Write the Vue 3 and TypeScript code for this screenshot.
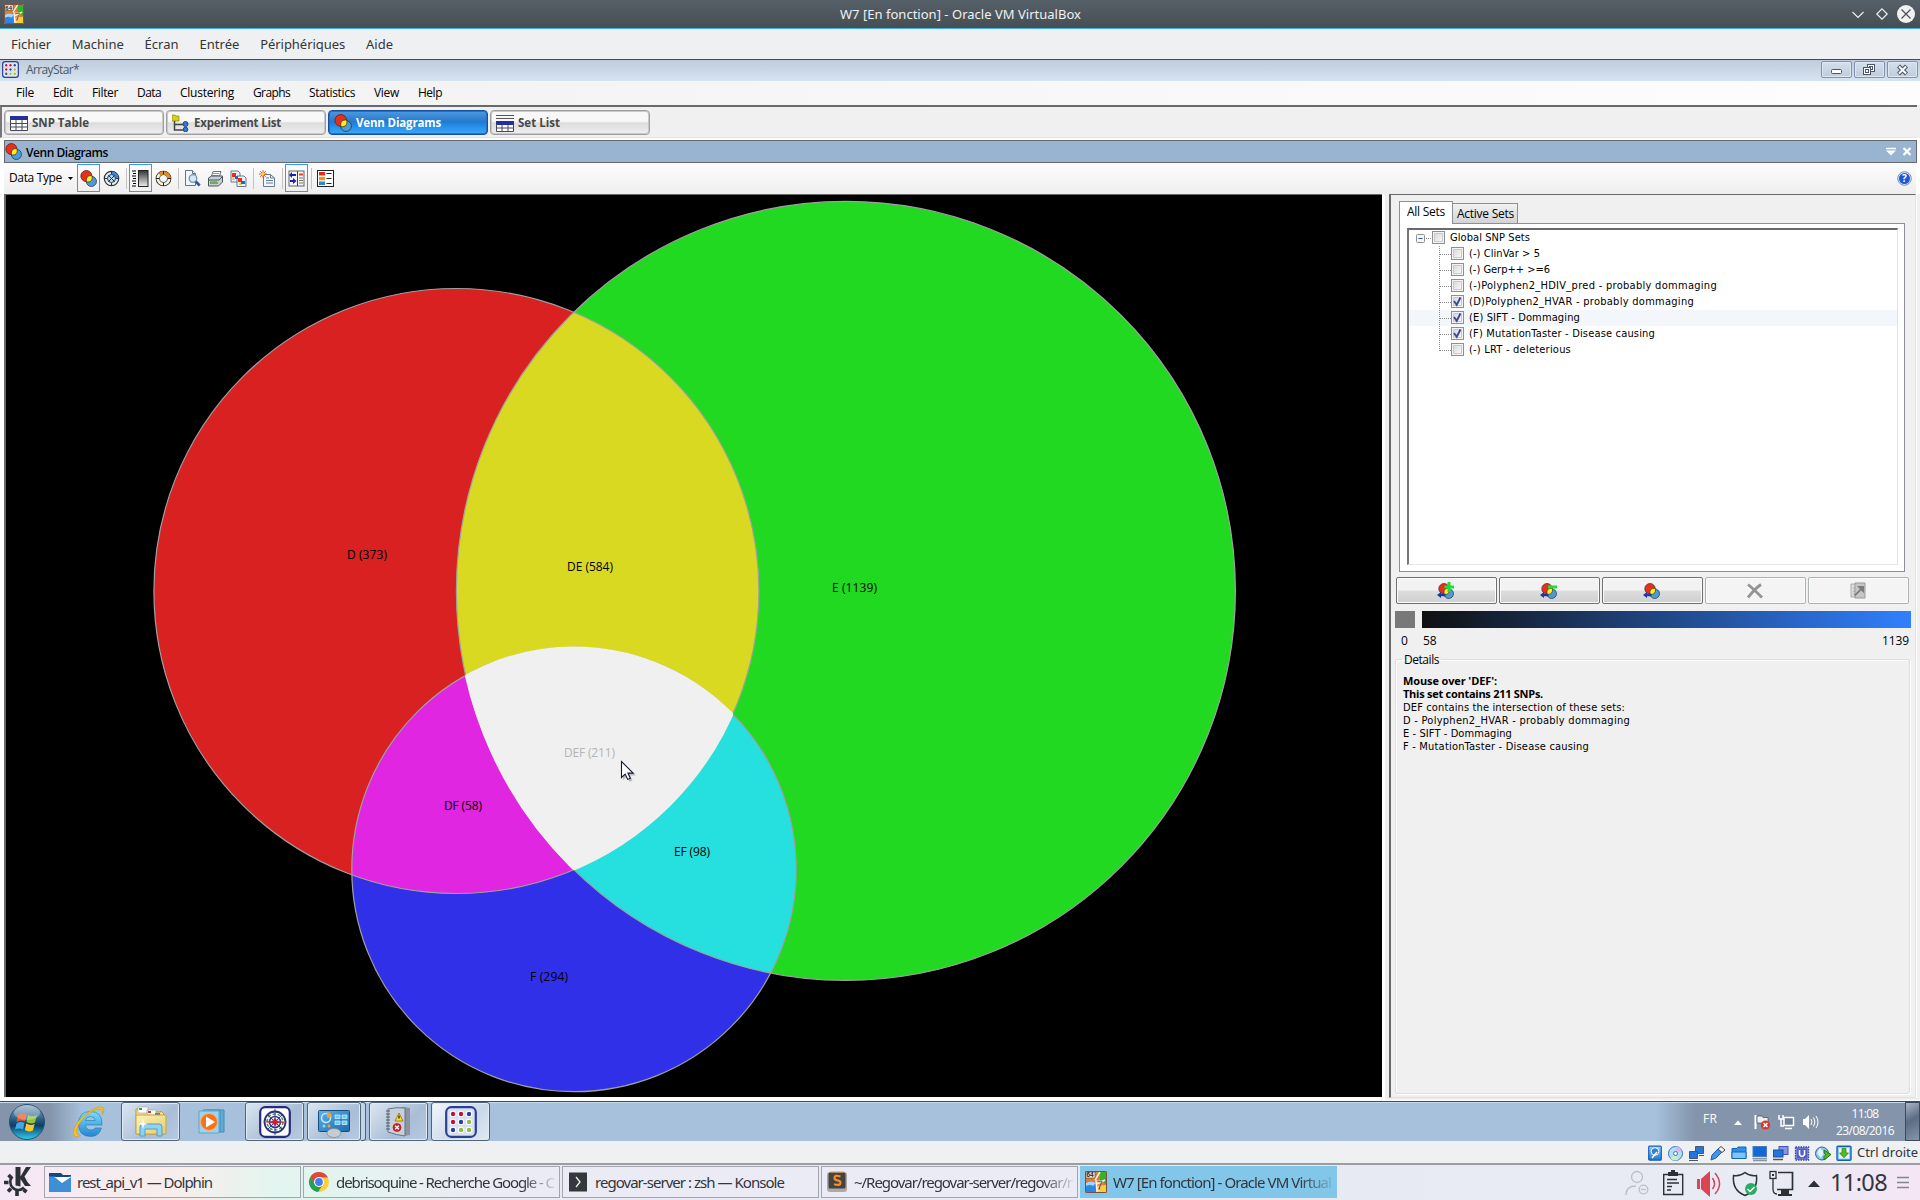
<script setup lang="ts">
import type { Directive } from 'vue'

// Spreads or tightens letters so a label occupies the given pixel width.
const vFit: Directive<HTMLElement, number> = {
  mounted(el, { value }) {
    const natural = el.getBoundingClientRect().width
    const count = (el.textContent ?? '').trim().length
    if (value && count) el.style.letterSpacing = `${(value - natural) / count}px`
  },
}

interface Label { text: string; width: number }

const hostMenu: Label[] = [
  { text: 'Fichier', width: 40 },
  { text: 'Machine', width: 52 },
  { text: 'Écran', width: 34 },
  { text: 'Entrée', width: 40 },
  { text: 'Périphériques', width: 85 },
  { text: 'Aide', width: 27 },
]

const appMenu: Label[] = [
  { text: 'File', width: 18 },
  { text: 'Edit', width: 20 },
  { text: 'Filter', width: 26 },
  { text: 'Data', width: 24 },
  { text: 'Clustering', width: 54 },
  { text: 'Graphs', width: 37 },
  { text: 'Statistics', width: 46 },
  { text: 'View', width: 25 },
  { text: 'Help', width: 24 },
]

const views = [
  { text: 'SNP Table', width: 57, icon: 'table', active: false },
  { text: 'Experiment List', width: 87, icon: 'tree', active: false },
  { text: 'Venn Diagrams', width: 85, icon: 'venn', active: true },
  { text: 'Set List', width: 42, icon: 'list', active: false },
]

const sets = [
  { text: '(-) ClinVar > 5', width: 71, on: false, hover: false },
  { text: '(-) Gerp++ >=6', width: 81, on: false, hover: false },
  { text: '(-)Polyphen2_HDIV_pred - probably dommaging', width: 248, on: false, hover: false },
  { text: '(D)Polyphen2_HVAR - probably dommaging', width: 225, on: true, hover: false },
  { text: '(E) SIFT - Dommaging', width: 111, on: true, hover: true },
  { text: '(F) MutationTaster - Disease causing', width: 186, on: true, hover: false },
  { text: '(-) LRT - deleterious', width: 102, on: false, hover: false },
]

const regions = [
  { text: 'D (373)', x: 347, y: 559, width: 40 },
  { text: 'DE (584)', x: 567, y: 571, width: 46 },
  { text: 'E (1139)', x: 832, y: 592, width: 45 },
  { text: 'DF (58)', x: 444, y: 810, width: 38 },
  { text: 'EF (98)', x: 674, y: 856, width: 36 },
  { text: 'F (294)', x: 530, y: 981, width: 38 },
]

const details = [
  { text: "Mouse over 'DEF':", width: 94, bold: true },
  { text: 'This set contains 211 SNPs.', width: 140, bold: true },
  { text: 'DEF contains the intersection of these sets:', width: 222, bold: false },
  { text: 'D - Polyphen2_HVAR - probably dommaging', width: 227, bold: false },
  { text: 'E - SIFT - Dommaging', width: 109, bold: false },
  { text: 'F - MutationTaster - Disease causing', width: 186, bold: false },
]

const tasks = [
  { text: 'rest_api_v1 — Dolphin', width: 135, icon: 'dolphin', active: false, fade: false },
  { text: 'debrisoquine - Recherche Google - C', width: 218, icon: 'chrome', active: false, fade: true },
  { text: 'regovar-server : zsh — Konsole', width: 189, icon: 'konsole', active: false, fade: false },
  { text: '~/Regovar/regovar-server/regovar/r', width: 218, icon: 'sublime', active: false, fade: true },
  { text: 'W7 [En fonction] - Oracle VM Virtual', width: 218, icon: 'vm', active: true, fade: true },
]

const dots = ['#c8102e', '#c8102e', '#2b3f9b', '#c8102e', '#2b3f9b', '#8fbf3a', '#2b3f9b', '#8fbf3a', '#8fbf3a']
</script>

<template>
  <div class="screen">
    <svg class="defs" width="0" height="0">
      <defs>
        <linearGradient id="orb" x1="0" y1="0" x2="0" y2="1">
          <stop offset="0" stop-color="#8fb0c8" /><stop offset=".45" stop-color="#28587f" /><stop offset=".6" stop-color="#0b3f66" /><stop offset="1" stop-color="#2fd0f2" />
        </linearGradient>
        <linearGradient id="grayRamp" x1="0" y1="0" x2="0" y2="1">
          <stop offset="0" stop-color="#333" /><stop offset="1" stop-color="#eee" />
        </linearGradient>
        <linearGradient id="ie" x1="0" y1="0" x2="0" y2="1">
          <stop offset="0" stop-color="#7ddcf8" /><stop offset="1" stop-color="#2387d2" />
        </linearGradient>
        <linearGradient id="folder" x1="0" y1="0" x2="1" y2="1">
          <stop offset="0" stop-color="#fdf2b8" /><stop offset="1" stop-color="#e8cc68" />
        </linearGradient>
        <linearGradient id="panelBlue" x1="0" y1="0" x2="1" y2="1">
          <stop offset="0" stop-color="#5cb4ea" /><stop offset="1" stop-color="#1d69ad" />
        </linearGradient>
        <linearGradient id="boxBlue" x1="0" y1="0" x2="0" y2="1">
          <stop offset="0" stop-color="#9bd4f8" /><stop offset="1" stop-color="#1f74d0" />
        </linearGradient>
        <symbol id="venn" viewBox="0 0 16 16">
          <circle cx="10.7" cy="10.7" r="4.8" fill="#4f9ad6" stroke="#26445e" stroke-width=".8" />
          <circle cx="6" cy="5.7" r="5.2" fill="#e5301d" stroke="#6c241d" stroke-width=".8" />
          <path d="M6.300 11.300C5 7.300 7.600 4.600 11.300 5.500C12.200 9 10.300 11.800 6.300 11.300z" fill="#ffee2a" stroke="#3f3a10" stroke-width=".7" />
        </symbol>
        <symbol id="vm" viewBox="0 0 22 22">
          <rect width="22" height="22" rx="1" fill="#e47a32" />
          <path d="M1 12q5-3 10 0v9H1z" fill="#2d86e6" /><path d="M1 12q5-3 10 0l-3 3q-3-2-7 0z" fill="#9fd8fa" />
          <path d="M15 1h6v13q-4-5-6-4z" fill="#35b22c" /><path d="M12 15l9-1v7h-9z" fill="#f9cf38" />
          <path d="M10 9l5-8M12 13l8-4M11 9l1 12" stroke="#fff2d8" stroke-width="1.5" />
          <rect x="1" y="1" width="9" height="6" fill="#f0f0f0" stroke="#333" stroke-width=".5" />
          <text x="1.5" y="6.4" font-size="6.5" font-weight="700" font-family="Liberation Sans, sans-serif" fill="#222">64</text>
          <text x="11.5" y="19" font-size="12" font-weight="700" font-family="Liberation Sans, sans-serif" fill="#8a1520" stroke="#fff" stroke-width=".35">7</text>
          <rect x=".5" y=".5" width="21" height="21" rx="1" fill="none" stroke="#75523e" />
        </symbol>
        <symbol id="arraystar" viewBox="0 0 32 32">
          <rect x="1.2" y="1.2" width="29.6" height="29.6" rx="5" fill="#d6e0f2" stroke="#2b3f93" stroke-width="2.2" />
          <g v-for="(c, i) in dots" :key="i">
            <circle :cx="8 + (i % 3) * 8" :cy="8 + Math.floor(i / 3) * 8" r="3.3" fill="#fff" />
            <circle :cx="8 + (i % 3) * 8" :cy="8 + Math.floor(i / 3) * 8" r="2.2" :fill="c" />
          </g>
        </symbol>
      </defs>
    </svg>

    <header class="host-title">
      <svg class="host-logo" width="20" height="20"><use href="#vm" /></svg>
      <span class="host-caption"><span v-fit="241">W7 [En fonction] - Oracle VM VirtualBox</span></span>
      <svg width="70" height="28" viewBox="0 0 70 28">
        <path d="M2.500 12l5.500 5.500 5.500-5.500" fill="none" stroke="#eceff1" stroke-width="1.200" />
        <path d="M32 8.800l5.200 5.200-5.200 5.200-5.200-5.200z" fill="none" stroke="#eceff1" stroke-width="1.200" />
        <circle cx="56" cy="14" r="9" fill="#f0f1f2" /><path d="M51.500 9.500l9 9m0-9l-9 9" stroke="#475057" stroke-width="1.200" />
      </svg>
    </header>

    <nav class="host-menu"><span v-for="m in hostMenu" :key="m.text" v-fit="m.width">{{ m.text }}</span></nav>

    <div class="app-title">
      <svg width="17" height="17"><use href="#arraystar" /></svg>
      <span class="app-name"><span v-fit="53">ArrayStar*</span></span>
      <div class="win-buttons">
        <i><svg width="29" height="15"><rect x="9.500" y="7.500" width="10" height="4" rx="1" fill="#fff" stroke="#4b5568" /></svg></i>
        <i><svg width="29" height="15"><g fill="#fff" stroke="#4b5568"><rect x="12.500" y="2.500" width="7" height="7" /><rect x="14.500" y="4.500" width="3" height="3" /><rect x="8.500" y="5.500" width="7" height="7" /><rect x="10.500" y="7.500" width="3" height="3" /></g></svg></i>
        <i><svg width="29" height="15"><path d="M10.500 4l8 8m0-8l-8 8" stroke="#4b5568" stroke-width="4.200" /><path d="M11 4.500l7 7m0-7l-7 7" stroke="#fff" stroke-width="2" /></svg></i>
      </div>
    </div>
    <nav class="app-menu"><span v-for="m in appMenu" :key="m.text" v-fit="m.width">{{ m.text }}</span></nav>

    <div class="views">
      <div v-for="v in views" :key="v.text" class="view" :class="{ active: v.active }">
        <svg width="18" height="18" viewBox="0 0 18 18">
          <use v-if="v.icon === 'venn'" href="#venn" width="18" height="18" />
          <g v-else-if="v.icon === 'table'"><rect x=".5" y="2" width="17" height="14" fill="#fff" /><rect x="0" y="2" width="18" height="4" fill="#24309a" /><path d="M.5 6v10.500h17V6M.5 9.500h17M.5 13h17M6 6v10.500M12 6v10.500" stroke="#444b5e" fill="none" /></g>
          <g v-else-if="v.icon === 'tree'"><path d="M0 1h3l1 1h3v5H0z" fill="#d9cf19" stroke="#77720d" stroke-width=".6" /><path d="M2.500 7v9h9M3 10.500h8" fill="none" stroke="#444" stroke-width="1.500" /><circle cx="13.500" cy="10" r="2.500" fill="#3678d1" stroke="#224786" /><circle cx="13.500" cy="15.500" r="2.300" fill="#3678d1" stroke="#224786" /></g>
          <g v-else><path d="M0 1.500h18M0 4.500h18" stroke="#555" /><rect x=".5" y="8" width="17" height="9" fill="#fff" /><rect x="0" y="7" width="18" height="4" fill="#24309a" /><path d="M.5 10v7.500h17V10M.5 14h17M6 11v6.500M12 11v6.500" stroke="#444b5e" fill="none" /></g>
        </svg>
        <b v-fit="v.width">{{ v.text }}</b>
      </div>
    </div>

    <section class="child">
      <div class="child-title">
        <svg width="17" height="17"><use href="#venn" /></svg>
        <b v-fit="82">Venn Diagrams</b>
        <svg class="push" width="29" height="12"><path d="M0 2.500h10" stroke="#fff" stroke-width="1.500" /><path d="M0 4.500h10l-5 5z" fill="#fff" /><path d="M17.500 2l7 7m0-7l-7 7" stroke="#fff" stroke-width="2.200" /></svg>
      </div>

      <div class="toolbar">
        <span v-fit="53" class="dtype">Data Type</span>
        <svg class="drop" width="5" height="3"><path d="M0 0h5L2.500 3z" /></svg>
        <i class="tool on"><svg width="17" height="17"><use href="#venn" /></svg></i>
        <i class="tool"><svg width="17" height="17" viewBox="0 0 17 17"><circle cx="8.500" cy="8.500" r="7.200" fill="#e8edf2" stroke="#27343f" stroke-width="1.200" /><path d="M8.500 1.500a7 7 0 0 1 7 7h-3a4 4 0 0 0-4-4z" fill="#2f8ae0" /><circle cx="8.500" cy="8.500" r="4" fill="#b8dcf5" stroke="#27343f" /><path d="M5.700 5.700l5.600 5.600m0-5.600l-5.600 5.600M8.500 1v3m0 9v3M1 8.500h3m9 0h3" stroke="#27343f" /></svg></i>
        <u />
        <i class="tool on"><svg width="17" height="18"><path d="M0 2h4M1 4.500h3M0 7h4M1 9.500h3M0 12h4M1 14.500h3M0 17h4" stroke="#000" /><rect x="6.500" y="1.500" width="9.500" height="16" fill="url(#grayRamp)" stroke="#222" /></svg></i>
        <i class="tool"><svg width="17" height="17" viewBox="0 0 17 17"><circle cx="8.500" cy="8.500" r="5.700" fill="none" stroke="#222" stroke-width="4.300" /><circle cx="8.500" cy="8.500" r="5.700" fill="none" stroke="#f7eedb" stroke-width="2.800" /><path d="M4.500 4.500a5.700 5.700 0 0 1 9.700 4" fill="none" stroke="#e88716" stroke-width="2.800" /><path d="M8.500 1v3M8.500 13v3M1 8.500h3m9 0h3" stroke="#222" /></svg></i>
        <u />
        <i class="tool"><svg width="17" height="17"><path d="M1.500.5h7l3 3v12h-10z" fill="#f2f6fa" stroke="#60758d" /><path d="M8.500.5v3h3" fill="#fff" stroke="#60758d" /><circle cx="9" cy="8.500" r="3.800" fill="#d3e7f7" stroke="#7890ab" stroke-width="1.300" /><path d="M11.700 11.500l4 4" stroke="#35559a" stroke-width="2.600" /></svg></i>
        <i class="tool"><svg width="17" height="17"><path d="M6 1.500h8l-2 6H4z" fill="#fff" stroke="#65717b" /><path d="M6 3.500h6M5.500 5.500h6" stroke="#8796a3" /><path d="M1.500 8l3-2h11v6l-4 4h-10z" fill="#c8cfd3" stroke="#4a555e" /><path d="M2 10h10l3-3M3 13h8" stroke="#4a555e" fill="none" /><path d="M3 12h7" stroke="#61b74e" stroke-width="1.500" /></svg></i>
        <i class="tool"><svg width="17" height="17"><path d="M1 1h7l2 2v9H1z" fill="#eef2f6" stroke="#66798e" /><path d="M7 6h7l2 2v8.500H7z" fill="#eef2f6" stroke="#66798e" /><path d="M2 3h4v4H2zM8 8h4v4H8z" fill="#e3321c" /><path d="M5 6h3v3H5zM11 11h4v3h-4z" fill="#2863c4" /><path d="M3 7l2 3H2zM10 12l2 3H9z" fill="#f2c21c" /></svg></i>
        <u />
        <i class="tool"><svg width="17" height="17"><path d="M4.500 4.500h7l4 3.500v8.500h-11z" fill="#f3f6f9" stroke="#667b90" /><path d="M11.500 4.500V8h4M7 8h3M7 10.500h7M7 13h7" stroke="#667b90" fill="none" /><path d="M4 0v8M0 4h8M1.200 1.200l5.600 5.600m0-5.600L1.200 6.800" stroke="#ea5a1a" /><circle cx="4" cy="4" r="1.500" fill="#ffda35" /></svg></i>
        <u />
        <i class="tool on"><svg width="17" height="17"><rect x="1" y="1" width="15" height="15" fill="#f4f4f4" stroke="#62676d" /><path d="M9.500 1v15" stroke="#444" /><path d="M4 2L1 5l3 3V6h4V4H4zM5 8v2H2v2h3v2l3.500-3z" fill="#1c24a6" /><path d="M11 4.500h4" stroke="#e2421f" stroke-width="2" /><path d="M11 8h4M11 10.500h4M11 13h4" stroke="#777" /></svg></i>
        <u />
        <i class="tool"><svg width="17" height="17"><rect x=".5" y=".5" width="16" height="16" fill="#fff" stroke="#222" /><rect x="2" y="2" width="6" height="3.500" fill="#e02d19" /><rect x="2" y="6.800" width="6" height="3.500" fill="#ee941f" /><rect x="2" y="11.500" width="6" height="3.500" fill="#2f84dc" /><path d="M9.500 3.500h5M9.500 8.500h5M9.500 13.500h5" stroke="#222" /></svg></i>
        <svg class="push" width="15" height="15"><circle cx="7.500" cy="7.500" r="6.800" fill="#dce7fb" stroke="#6a86bb" stroke-width=".9" /><circle cx="7.500" cy="7.500" r="5.500" fill="#1d57d8" /><text x="7.500" y="11.200" text-anchor="middle" font-size="10" font-weight="700" fill="#fff">?</text></svg>
      </div>

      <div class="work">
        <svg class="canvas" width="1378" height="903" viewBox="4 194 1378 903">
          <defs>
            <clipPath id="inD"><circle cx="456.400" cy="591" r="302.500" /></clipPath>
            <clipPath id="inE"><circle cx="845.900" cy="590.900" r="389.500" /></clipPath>
            <clipPath id="inF"><circle cx="574" cy="869.500" r="222.200" /></clipPath>
          </defs>
          <rect x="4" y="194" width="1378" height="903" fill="#696969" /><rect x="6" y="195" width="1376" height="902" />
          <circle cx="456.400" cy="591" r="302.500" fill="#d92121" />
          <circle cx="845.900" cy="590.900" r="389.500" fill="#21d921" />
          <circle cx="574" cy="869.500" r="222.200" fill="#3030e8" />
          <circle cx="845.900" cy="590.900" r="389.500" fill="#d9d921" clip-path="url(#inD)" />
          <circle cx="574" cy="869.500" r="222.200" fill="#e026e0" clip-path="url(#inD)" />
          <circle cx="574" cy="869.500" r="222.200" fill="#26e0e0" clip-path="url(#inE)" />
          <g fill="none" stroke="#a0a0a0" stroke-width="1.200">
            <circle cx="456.400" cy="591" r="302.500" /><circle cx="845.900" cy="590.900" r="389.500" /><circle cx="574" cy="869.500" r="222.200" />
          </g>
          <g clip-path="url(#inD)"><g clip-path="url(#inE)"><circle cx="574" cy="869.500" r="222.200" fill="#f0f0f0" /></g></g>
          <g fill="none" stroke="#f0f0f0" stroke-width="1.600">
            <g clip-path="url(#inD)"><g clip-path="url(#inE)"><circle cx="574" cy="869.500" r="222.200" /></g></g>
            <g clip-path="url(#inD)"><g clip-path="url(#inF)"><circle cx="845.900" cy="590.900" r="389.500" /></g></g>
            <g clip-path="url(#inE)"><g clip-path="url(#inF)"><circle cx="456.400" cy="591" r="302.500" /></g></g>
          </g>
          <text v-for="r in regions" :key="r.text" :x="r.x" :y="r.y" :textLength="r.width">{{ r.text }}</text>
          <text x="564" y="757" textLength="51" fill="#b4b4b4">DEF (211)</text>
          <path d="M623 763v17l4-3.500 2.500 5.500 3-1.500-2.500-5h6z" opacity=".22" />
          <path d="M621.500 761.500v16l3.700-3.400 2.500 5.300 2.700-1.200-2.500-5.100h5.300z" fill="#fff" stroke="#14182e" stroke-width="1.100" />
        </svg>

        <aside class="side">
          <div class="tabs"><span class="tab front"><span v-fit="38">All Sets</span></span><span class="tab"><span v-fit="57">Active Sets</span></span></div>
          <div class="page">
            <div class="tree">
              <div class="row root">
                <svg width="16" height="16"><rect x=".5" y="4.500" width="8" height="8" rx="1" fill="#f6f6f6" stroke="#8e8f8f" /><path d="M2.500 8.500h4" stroke="#3553a4" /><path d="M10 8.500h6" stroke="#888" stroke-dasharray="1 1" /></svg>
                <i class="check" /><span v-fit="80">Global SNP Sets</span>
              </div>
              <div v-for="(s, i) in sets" :key="s.text" class="row" :class="{ hover: s.hover }">
                <svg class="branch" width="12" height="16"><path :d="i === 6 ? 'M.5 0v9' : 'M.5 0v16'" stroke="#888" stroke-dasharray="1 1" /><path d="M1 8.500h11" stroke="#888" stroke-dasharray="1 1" /></svg>
                <i class="check"><svg v-if="s.on" width="11" height="11"><path d="M2 5l2.700 3.800L8.500 1.500" fill="none" stroke="#3c4f97" stroke-width="2" /></svg></i>
                <span v-fit="s.width">{{ s.text }}</span>
              </div>
            </div>
          </div>

          <div class="actions">
            <div v-for="n in 5" :key="n" class="action" :class="{ off: n > 3 }">
              <svg width="18" height="18" viewBox="0 0 18 18">
                <template v-if="n < 4">
                  <use href="#venn" x="1" y="1" width="16" height="16" />
                  <path d="M0 13l4-3v2h4.500v2.200H4V16z" fill="#173aa5" />
                  <path v-if="n === 1" d="M10.500 0h3v3.500h3.500v3h-3.500V10h-3V6.500H7.500v-3h3z" fill="#22dc38" />
                  <path v-if="n === 2" d="M8 3.500h9v3H8z" fill="#22dc38" />
                </template>
                <path v-else-if="n === 4" d="M2 2.500c4 3 8 7 14 13M15 2.500c-5 3-8 7-13 13" fill="none" stroke="#929292" stroke-width="2.800" />
                <g v-else><path d="M2 2h10v13H2z" fill="#ddd" stroke="#aaa" /><path d="M4 6h6M4 9h6M4 12h6" stroke="#aaa" /><path d="M6 1h10v15H6z" fill="#c6c6c6" stroke="#999" /><path d="M5 13l6-6-3-3h7v7l-3-2.500-5.500 5.500z" fill="#7b7b7b" /></g>
              </svg>
            </div>
          </div>

          <div class="scale"><i /><b /></div>
          <div class="scale-labels"><span>0</span><span v-fit="14">58</span><span v-fit="27" class="push">1139</span></div>

          <fieldset class="details">
            <legend><span v-fit="35">Details</span></legend>
            <p v-for="d in details" :key="d.text"><span v-fit="d.width" :class="{ bold: d.bold }">{{ d.text }}</span></p>
          </fieldset>
        </aside>
      </div>
    </section>

    <div class="win-bar">
      <svg class="orb" width="38" height="38" viewBox="0 0 38 38">
        <circle cx="19" cy="19" r="17.500" fill="url(#orb)" stroke="#24506f" />
        <path d="M10 12q4-3 8.500-.5l-1.500 7q-4-2-8.500.5z" fill="#ee5a24" /><path d="M20 12q4.500 2.500 9 0l-2 7.500q-4 2-8.500-.5z" fill="#8cc63e" /><path d="M8.500 20.500q4-2.500 8-.5l-1.500 6.500q-4-2-8 0z" fill="#3fa9e8" /><path d="M18.200 20.500q4.500 2.500 8.500.5l-1.800 6.500q-4 2-8-.5z" fill="#fdc629" />
        <ellipse cx="19" cy="9.500" rx="13" ry="7.500" fill="#fff" opacity=".28" />
      </svg>
      <svg class="ie" width="34" height="34" viewBox="0 0 34 34">
        <path fill-rule="evenodd" d="M30 20H13.500q.5 5 5.500 5 3 0 4-2h6.500q-2.500 8.500-10.500 8.500Q6.500 31.500 6.500 19 6.500 6.500 18.500 6.500 30.500 6.500 30 20zM13.500 15.500h9.800q-.5-4-4.800-4-4.200 0-5 4z" fill="url(#ie)" stroke="#1c77b8" stroke-width=".6" />
        <path d="M8.500 30.500Q2 34 1.500 28 1.500 18 16 7.500 25 1 30 2q3.500 1.500.5 7.500 1-5-3-5.500-5 0-12.500 6Q4 20 4.500 27q.5 3.500 4 3.500z" fill="#f7c61d" stroke="#c8920a" stroke-width=".5" />
      </svg>
      <div class="wbtn b1">
        <svg width="34" height="34" viewBox="0 0 34 34"><path d="M2 4h9l2 3h14v-1l3 3v20H2z" fill="#f4e296" stroke="#bb9a38" /><path d="M4 2h10v6H4zM13 5h9v5h-9z" fill="#fff" stroke="#a8a08a" stroke-width=".6" /><path d="M5 3h3v2H5z" fill="#39a33c" /><path d="M14 6h3v2h-3z" fill="#cf3a30" /><path d="M21 8h5v2h-5z" fill="#3a85d0" /><path d="M2 10h30v19H2z" fill="url(#folder)" stroke="#c6a548" /><path d="M6 31V22q0-3 3-3h16q3 0 3 3v9h-5v-7H11v7z" fill="#8fd3f0" stroke="#4c9fc8" /><path d="M9 14l1 4 4 1-4 1-1 4-1-4-4-1 4-1z" fill="#fff" /></svg>
      </div>
      <svg class="wmp" width="30" height="30" viewBox="0 0 30 30"><path d="M8 3h18v22H8z" fill="#5eacd6" stroke="#458bb5" /><path d="M5 3h17v22H5z" fill="#79bfe2" stroke="#458bb5" /><path d="M1 4h20v22H1z" fill="#9ed2ed" stroke="#62a5cb" /><circle cx="11" cy="15" r="8.500" fill="#f3741d" stroke="#fbb37b" /><path d="M8 9.500v11l9-5.500z" fill="#fff" /></svg>
      <div class="wbtn b2">
        <svg width="32" height="32" viewBox="0 0 32 32"><rect x="1.200" y="1.200" width="29.600" height="29.600" rx="5" fill="#fff" stroke="#262b7c" stroke-width="2.200" /><circle cx="16" cy="16" r="10.500" fill="none" stroke="#2c2f82" stroke-width="1.800" /><circle cx="16" cy="16" r="8" fill="none" stroke="#3b963d" stroke-width="1.500" stroke-dasharray="3 2" /><circle cx="16" cy="16" r="5.500" fill="none" stroke="#343b9c" stroke-width="1.600" /><path d="M16 3v26M8 8l16 16m0-16L8 24" stroke="#2c2f82" stroke-width=".9" /><path d="M3 16l10-1 3-3 3 3 10 1-10 1-3 3-3-3z" fill="#c82334" /></svg>
      </div>
      <div class="wbtn b3">
        <svg width="34" height="34" viewBox="0 0 34 34"><rect x="1.500" y="5.500" width="31" height="21" rx="1" fill="url(#panelBlue)" stroke="#174e80" /><circle cx="9" cy="13" r="4.500" fill="none" stroke="#c8e8fa" stroke-width="1.500" /><path d="M10 7a5 5 0 0 1 5 5l-5 1z" fill="#f1a33c" /><path d="M18 10h5v3.500h-5zM25 10h5v3.500h-5zM18 16h5v3.500h-5zM25 16h5v3.500h-5z" fill="#63cff4" stroke="#d6f3fd" stroke-width=".7" /><circle cx="7" cy="21" r="1.500" fill="#8bdcf8" /><circle cx="12" cy="21" r="1.500" fill="#f1a33c" /><ellipse cx="17" cy="28" rx="7" ry="4.500" fill="#c9cccf" stroke="#7b858e" stroke-width=".7" /></svg>
      </div>
      <i class="stack" />
      <div class="wbtn b4">
        <svg width="30" height="34" viewBox="0 0 30 34"><path d="M4 6l16-4 6 1v27l-6 1z" fill="#8c93a1" /><path d="M4 4q8-2 17-1v28q-9-1-17-4z" fill="#c8cfdb" stroke="#67718a" /><path d="M2 6h4M2 9h4M2 12h4M2 15h4M2 18h4M2 21h4M2 24h4" stroke="#4d566c" /><path d="M15 8l4 8h-8z" fill="#ffdc20" stroke="#77640a" stroke-width=".7" /><path d="M15 10.500v3" stroke="#222" stroke-width="1.300" /><circle cx="13" cy="22.500" r="4" fill="#d9262d" stroke="#8b1116" stroke-width=".6" /><path d="M11.200 20.700l3.600 3.600m0-3.600l-3.600 3.600" stroke="#fff" stroke-width="1.300" /></svg>
      </div>
      <div class="wbtn b5 lit"><svg width="32" height="32"><use href="#arraystar" /></svg></div>

      <div class="win-tray">
        <span v-fit="14" class="lang">FR</span>
        <svg class="t-up" width="8" height="5"><path d="M0 5l4-4.500L8 5z" fill="#fff" /></svg>
        <svg class="t-flag" width="17" height="16"><path d="M1.500 1v14" stroke="#fff" stroke-width="2" /><path d="M3 2h5l1 1.500h5V10H9L8 9H3z" fill="#eef0f2" stroke="#3e4c5c" stroke-width=".7" /><circle cx="11.500" cy="11" r="4.600" fill="#e0332a" /><path d="M9.500 9l4 4m0-4l-4 4" stroke="#fff" stroke-width="1.500" /></svg>
        <svg class="t-net" width="17" height="16"><path d="M6 3.500h9.500v8H6zM7 14.500h7" fill="#6c7f94" stroke="#fff" stroke-width="1.500" /><path d="M1 1v4h4V1M3 5v7h3" fill="none" stroke="#fff" stroke-width="1.500" /></svg>
        <svg class="t-snd" width="17" height="16"><path d="M1 5h2l4-4v14l-4-4H1z" fill="#fff" /><path d="M9 5q2 3 0 6M11.500 3.500q3 4.500 0 9M14 2q4 6 0 12" fill="none" stroke="#fff" /></svg>
        <div class="clock"><span v-fit="27">11:08</span><span v-fit="58">23/08/2016</span></div>
        <i class="peek" />
      </div>
    </div>

    <div class="vm-status">
      <svg width="205" height="17" viewBox="0 0 205 17">
        <rect x=".7" y="1.200" width="12.600" height="14" rx="1" fill="url(#boxBlue)" stroke="#1661b8" stroke-width="1.200" /><circle cx="7" cy="6.500" r="3.800" fill="#2d82da" stroke="#fff" /><path d="M4 13l5-6" stroke="#fff" stroke-width="1.500" />
        <circle cx="27.500" cy="8.500" r="7" fill="#b3dffa" stroke="#3573bf" /><path d="M27.500 1.500a7 7 0 0 1 6 4l-6 3z" fill="#d8b6f2" /><path d="M27.500 8.500l-5 5a7 7 0 0 0 8 1z" fill="#c6f1c8" /><circle cx="27.500" cy="8.500" r="2" fill="#fff" stroke="#3573bf" />
        <path d="M47.500 1.500h8v7h-8z" fill="#2376de" stroke="#4c5662" /><path d="M41.500 6.500h8v7h-8z" fill="#2376de" stroke="#4c5662" /><path d="M41 15.500h9M51 10.500h5" stroke="#4c5662" />
        <path d="M63 15l1-5 6-6 4 3-6 6z" fill="#3f95ec" stroke="#1f5cae" /><path d="M70 4l3-2.500L77 5l-3 2.500z" fill="#f5f5f5" stroke="#444" />
        <path d="M84 13.500v-10h5l1-1.500h8v11.500z" fill="#2e91e6" stroke="#0f67b8" /><path d="M84 13.500V7h14v6.500z" fill="#7fc4f7" stroke="#0f67b8" />
        <rect x="105" y="1.500" width="13.500" height="10" fill="#1168d8" stroke="#4d7db0" /><path d="M104.500 13.500h14.500M105 15.500h14" stroke="#8796a6" stroke-width="1.500" />
        <rect x="131" y="1.500" width="9" height="8" fill="#8593eb" stroke="#4a55b0" /><rect x="125.500" y="5" width="9.500" height="7" fill="#2376de" stroke="#1b5298" /><path d="M125 14.500h10" stroke="#4c5662" stroke-width="1.500" />
        <rect x="147.500" y="2" width="13" height="13" fill="#7d88da" stroke="#3c48ae" stroke-width="1.400" stroke-dasharray="1.500 1" /><rect x="149" y="3.500" width="10" height="10" fill="#515fc7" /><path d="M151.500 5v4.500q2.500 4 5 0V5" fill="none" stroke="#fff" stroke-width="1.600" />
        <circle cx="174" cy="8.500" r="6.500" fill="#8dc8f2" stroke="#2565ac" /><path d="M172 3l-3 5 4 5 3-6z" fill="#e5f5fe" /><path d="M176 5l7 4.500-7 5.500v-3.500l2-2-2-1.500z" fill="#55b82e" stroke="#247213" />
        <rect x="189" y="1.200" width="14" height="14" rx="1" fill="#8bcaf8" stroke="#1661b8" stroke-width="1.400" /><rect x="191" y="3" width="10" height="10.500" fill="#eaf7ff" /><path d="M194 3.500h4V8h2.500L196 12.800 191.500 8h2.500z" fill="#52c010" stroke="#2a7c05" stroke-width=".7" />
      </svg>
      <span v-fit="61">Ctrl droite</span>
    </div>

    <footer class="panel">
      <svg class="kde" width="28" height="30" viewBox="0 0 28 30">
        <path d="M11.500 0h5v9.500L22 0h5l-6.500 9.500Q23 15.500 27 19h-6l-4.500-7v7.500l-5-1z" fill="#2c3136" />
        <path d="M8.500 9.500a7.500 7.500 0 1 0 11.500 11" fill="none" stroke="#2c3136" stroke-width="2.600" />
        <path d="M7 10.500L4.500 8M4.500 15.500H0M7 21.500L4 24.500m9-1v5.500m6.500-6.500l3 2.500" stroke="#2c3136" stroke-width="3.600" />
      </svg>
      <div v-for="t in tasks" :key="t.text" class="task" :class="[t.icon, { active: t.active }]">
        <svg width="22" height="22" viewBox="0 0 22 22">
          <g v-if="t.icon === 'dolphin'"><path d="M0 2h12l2 2h8v16H0z" fill="#124a80" /><path d="M0 5.500h6l7 5.500 8-6h1v16H0z" fill="#3f8fd6" /><path d="M5.500 6H22l-9 6z" fill="#fff" /></g>
          <g v-else-if="t.icon === 'chrome'"><circle cx="11" cy="11" r="10" fill="#fdd03b" /><path d="M2.300 6A10 10 0 0 1 20 6.500H11L6.500 14z" fill="#dc4a3d" /><path d="M2.300 6l5 8.500L11 16l3-1-4 6A10 10 0 0 1 2.300 6z" fill="#21a05a" /><circle cx="11" cy="11" r="5" fill="#fff" /><circle cx="11" cy="11" r="3.900" fill="#447ff1" /></g>
          <g v-else-if="t.icon === 'konsole'"><rect x="2" y="1.500" width="18" height="19" fill="#33383c" /><path d="M9 6l4 5-4 5" fill="none" stroke="#eee" stroke-width="1.300" /></g>
          <g v-else-if="t.icon === 'sublime'"><rect x="1" y="1" width="20" height="20" rx="3" fill="#aaa" /><rect x="2.500" y="1.500" width="17" height="16" rx="1.500" fill="#46433f" /><path d="M4 1h14" stroke="#ef9a3c" /><path d="M14.500 5.500q-6-2-6 1.500 0 1.800 3 2.300 3 .6 3 2.500 0 3.300-6.500 1.500" fill="none" stroke="#f2902b" stroke-width="2.200" /></g>
          <use v-else href="#vm" width="22" height="22" />
        </svg>
        <span class="caption" :class="{ fade: t.fade }"><span v-fit="t.width">{{ t.text }}</span></span>
      </div>
      <svg class="tray" width="206" height="30" viewBox="1620 1166 206 30">
        <g fill="none" stroke="#bcbfc6" stroke-width="1.300"><circle cx="1637" cy="1176" r="5.500" /><path d="M1626 1194q0-9 10-9" /><circle cx="1643.500" cy="1188.500" r="4.300" /><path d="M1641 1188.500h5" /></g>
        <path d="M1663.700 1173.500h19v20h-19z" fill="none" stroke="#2c3136" stroke-width="1.400" /><path d="M1668 1171h3v-2h4v2h3v4h-10z" fill="#2c3136" /><path d="M1667 1178.500h10M1667 1182h12M1667 1185.500h5M1667 1189h4" stroke="#2c3136" stroke-width="1.300" />
        <path d="M1697 1178h3v10h-3zM1701 1178l9-8v26l-9-8z" fill="#da4453" /><path d="M1712.500 1177q4 6 0 11M1715 1172q9 11 0 21" fill="none" stroke="#da4453" stroke-width="1.500" />
        <path d="M1745 1171.500q5 4 11.500 3 1.500 15-11.500 20-13-5-11.500-20 6.500 1 11.500-3z" fill="none" stroke="#2c3136" stroke-width="1.500" /><circle cx="1751" cy="1188" r="6" fill="#27ae60" /><path d="M1747.500 1188l2.500 2.500 4.500-4.500" fill="none" stroke="#fff" stroke-width="1.500" />
        <path d="M1778 1171.500h14.500v17H1777" fill="none" stroke="#2c3136" stroke-width="1.700" /><rect x="1770" y="1170.500" width="6" height="7" fill="none" stroke="#2c3136" stroke-width="1.300" /><path d="M1772 1173h2v2h-2z" fill="#2c3136" /><path d="M1773 1178v10q0 5 4 5" fill="none" stroke="#2c3136" stroke-width="1.300" /><path d="M1781 1189h8v4h3v2h-14v-2h3z" fill="#2c3136" />
        <path d="M1808 1186l6-6.500 6 6.500z" fill="#2c3136" />
      </svg>
      <span class="host-clock"><span v-fit="57">11:08</span></span>
      <svg class="burger" width="12" height="13"><path d="M0 1.500h12M0 6.500h12M0 11.500h12" stroke="#84868c" stroke-width="1.600" /></svg>
    </footer>
  </div>
</template>

<style>
body { margin: 0; overflow: hidden; }
</style>

<style scoped>
* { box-sizing: border-box; }
.screen { width: 1920px; height: 1200px; display: flex; flex-direction: column; background: #f0f0f0; font: 12px/16px "Open Sans", "Noto Sans", sans-serif; color: #000; overflow: hidden; white-space: nowrap; }
.defs { display: block; height: 0; flex: none; }
svg { display: block; flex: none; }
i, u { display: block; flex: none; text-decoration: none; font-style: normal; }
.push { margin-left: auto; }

.host-title { height: 29px; display: flex; align-items: center; background: linear-gradient(#566068, #464e54); border-bottom: 1px solid #3daee9; color: #eff0f1; font: 13px/28px "Noto Sans", sans-serif; }
.host-logo { margin-left: 4px; }
.host-caption { flex: 1; display: flex; justify-content: center; padding-left: 47px; }
.host-menu { height: 31px; display: flex; align-items: center; gap: 20.800px; padding-left: 11px; background: #eff0f1; border-bottom: 1px solid #454a4e; color: #31363b; font: 13px/30px "Noto Sans", sans-serif; }

.app-title { height: 21px; display: flex; align-items: flex-start; padding: 1px 2px; background: linear-gradient(#bfccdb, #d6e3f1); color: #4b5a68; }
.app-name { margin: 1px 0 0 7px; }
.win-buttons { margin-left: auto; display: flex; gap: 2px; }
.win-buttons i { width: 31px; height: 17px; border: 1px solid #8390b0; border-radius: 2px; background: linear-gradient(#d3dfec, #bfccdc); box-shadow: inset 0 0 0 1px #dce7f2; }
.app-menu { height: 24px; display: flex; align-items: center; gap: 19px; padding-left: 16px; background: linear-gradient(90deg, #f1f1f1, #fdfdfd); }
.views { height: 33px; display: flex; gap: 2px; padding: 3px 0 0 2px; margin-right: 3px; border-top: 2px solid #696969; border-left: 2px solid #777; border-bottom: 1px solid #e3e3e3; background: #f0f0f0; }
.view { width: 160px; height: 25px; display: flex; align-items: center; gap: 4px; padding-left: 5px; border: 1px solid #a0a0a0; box-shadow: inset 0 0 0 1px #c8c8c8; border-radius: 4px; background: linear-gradient(#f8f8f8 0 45%, #dcdcdc 52%, #f0f0f0); color: #484848; }
.view b { font-weight: 700; font-size: 11.500px; }
.view.active { color: #fff; border-color: #174f9c; box-shadow: inset 0 0 0 1px #2a6fc0; background: linear-gradient(#4b9ae3, #2777cb 48%, #1c83de 52%, #3ca7fb); }

.child { height: 963px; padding: 2px 0 0 4px; background: #fff; border-left: 0; display: flex; flex-direction: column; }
.child-title { width: 1913px; height: 23px; display: flex; align-items: center; padding: 0 1px 0 0; background: #99b4d1; border: 1px solid #656a70; font-weight: 600; }
.child-title b { margin-left: 4px; font-weight: 600; line-height: 20px; margin-top: 2px; }
.toolbar { width: 1912px; height: 31px; display: flex; align-items: center; background: linear-gradient(#fdfdfd, #eeeeee); padding: 1px 4px 2px 5px; }
.drop { margin: 0 3px 0 6px; }
.toolbar .push { margin-right: 0; }
.tool { width: 23px; height: 28px; display: flex; align-items: center; justify-content: center; }
.on { border: 1px solid #3399ff; }
.dtype + .drop + .tool { margin-left: 1px; }
.toolbar u { width: 1px; height: 21px; background: #c3c3c3; margin: 0 2.500px; }
.work { flex: 1; display: flex; gap: 7px; background: linear-gradient(90deg, #fff 1381px, #f0f0f0 1381px); border-bottom: 1px solid #fff; }
.canvas text { font: 12px "Open Sans", "Noto Sans", sans-serif; }
.side { width: 527px; height: 904px; border-left: 2px solid #696969; border-top: 1px solid #696969; border-right: 1px solid #e3e3e3; border-bottom: 1px solid #dedede; background: #f0f0f0; box-shadow: 1px 0 0 #fff; }
.tabs { display: flex; align-items: flex-end; height: 28px; padding: 0 0 0 8px; }
.tab { width: 66px; height: 20px; border: 1px solid #8c8f98; border-bottom: 0; background: linear-gradient(#f2f2f2, #d3d3d3); padding: 2px 4px; margin-left: -1px; }
.tab.front { width: 54px; height: 23px; background: #fff; padding: 2px 7px; margin: 0 0 -1px; z-index: 1; position: relative; }
.page { width: 506px; height: 349px; margin-left: 8px; padding: 4px 6px 6px 7px; background: #fff; border: 1px solid #8c8f98; }
.tree { height: 337px; border: 2px solid #e3e3e3; border-top-color: #696969; border-left-color: #777; border-bottom-width: 1px; border-right-width: 1px; background: #fff; font: 11px/16px "DejaVu Sans Condensed", "Noto Sans", sans-serif; }
.row { height: 16px; display: flex; align-items: center; padding-left: 30px; }
.root { padding-left: 7px; }
.row > span { margin-top: -1px; }
.row.hover { background: #f3f7fc; }
.check { width: 13px; height: 13px; border: 1px solid #8e8f8f; background: linear-gradient(135deg, #d2d2d6, #fff); box-shadow: inset 0 0 0 1px #f4f4f4, inset 0 0 0 2px #c8cbd0; margin: -1px 5px 0 0; }
.actions { display: flex; gap: 2px; padding: 5px 0 0 5px; }
.action { width: 101px; height: 27px; display: flex; align-items: center; justify-content: center; border: 1px solid #707070; border-radius: 2px; background: linear-gradient(#f2f2f2 48%, #dddddd 52%, #cfcfcf); box-shadow: inset 0 0 0 1px #fbfbfb; }
.action svg { margin-right: 1px; }
.action.off { border-color: #adb2b5; background: #f4f4f4; }
.scale { display: flex; gap: 7px; padding: 7px 0 0 4px; }
.scale i { width: 20px; height: 17px; background: #787878; }
.scale b { width: 489px; height: 17px; background: linear-gradient(90deg, #101010, #3080ff); }
.scale-labels { display: flex; height: 24px; padding: 4px 6px 0 10px; font: 12px/17px "Open Sans", sans-serif; }
.scale-labels span:nth-child(2) { margin-left: 15px; }
.details { width: 515px; height: 442px; margin: 0 0 0 4px; border: 1px solid #d5dfe5; border-radius: 3px; box-shadow: inset 1px 1px 0 #fff, 1px 1px 0 #fff; padding: 8px 0 0 7px; }
.details legend { padding: 0 2px; margin-left: -1px; height: 15px; line-height: 15px; }
.details p { margin: 0; height: 13px; font: 11px/13px "DejaVu Sans Condensed", "Noto Sans", sans-serif; }
.details .bold { display: block; width: fit-content; line-height: 12px; font-family: "Open Sans", sans-serif; font-size: 11px; font-weight: 700; }

.win-bar { height: 40px; display: flex; align-items: center; border-top: 1px solid #3d4c59; box-shadow: inset 0 1px 0 #c9dced; background: linear-gradient(90deg, #8495ab 0, #8495ab 50px, #a7c0dc 82px, #a7c0dc 1656px, #8495ab 1694px); }
.orb { margin-left: 8px; }
.ie { margin-left: 26px; }
.wbtn { height: 39px; width: 59px; display: flex; align-items: center; justify-content: center; border: 1px solid #4f6479; border-radius: 3px; box-shadow: inset 0 0 0 1px #dfeaf5; background: linear-gradient(135deg, #dce6f1, #a9bed6 60%, #b6cae0); }
.lit { background: linear-gradient(135deg, #f3f7fb, #c9d8e8 60%, #e0eaf3); }
.b1 { margin-left: 15px; }
.wmp { margin-left: 18px; }
.b2 { margin-left: 17px; }
.b3 { margin-left: 3px; width: 54px; }
.stack { width: 5px; height: 39px; border: 1px solid #4f6479; border-left: 0; border-radius: 0 3px 3px 0; background: #c3d3e5; }
.b4, .b5 { margin-left: 3px; }
.win-tray { margin-left: auto; display: flex; align-items: center; color: #fff; }
.lang { margin: -5px 17px 0 0; }
.t-up { margin-right: 12px; margin-top: 2px; }
.t-flag { margin-right: 7px; }
.t-net { margin-right: 7px; }
.t-snd { margin-right: 17px; }
.clock { width: 58px; display: flex; flex-direction: column; align-items: center; line-height: 17px; margin-right: 11px; }
.peek { width: 15px; height: 39px; border: 1px solid #3b4a5c; background: linear-gradient(150deg, #aab6c4, #5c6d83 45%, #8495ab); }

.vm-status { height: 22px; display: flex; align-items: center; justify-content: flex-end; gap: 4px; padding: 1px 2px 0 0; background: #eff0f1; color: #31363b; font: 13px/21px "Noto Sans", sans-serif; }
.vm-status svg { margin-top: 1px; }
.panel { height: 37px; display: flex; align-items: center; padding-bottom: 1px; border-top: 2px solid #9b9ea1; background: linear-gradient(90deg, #f5e7f6 0, #f6ece9 180px, #e0f4ee 275px, #e0f3ed 340px, #e9e9f3 480px, #e7e9f3 1400px, #e8eaf4 1780px, #f4e6f5 1900px); color: #31363b; font: 15px/32px "Noto Sans", sans-serif; }
.kde { margin: 0 12px 0 4px; }
.task { width: 257px; height: 32px; display: flex; align-items: center; margin-right: 2px; padding-left: 4px; border: 1px solid #a2a5ab; background: rgba(255, 255, 255, .12); }
.task.active { background: #82c6ea; border-color: #82c6ea; }
.caption { margin-left: 6px; display: block; flex: 1; margin-right: 4px; line-height: 30px; }
.fade { -webkit-mask-image: linear-gradient(90deg, #000 85%, transparent 102%); mask-image: linear-gradient(90deg, #000 85%, transparent 102%); }
.tray { margin-left: 281px; }
.host-clock { margin-left: 4px; width: 57px; font-size: 23.500px; }
.burger { margin-left: 10px; }
</style>
